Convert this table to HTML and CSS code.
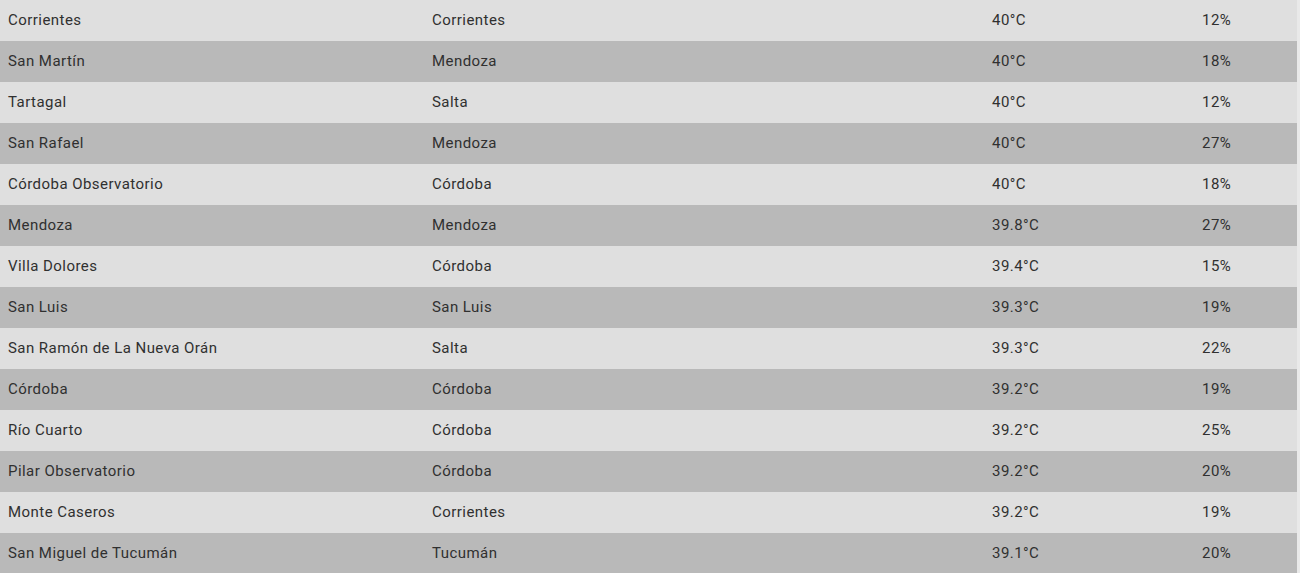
FILE: index.html
```html
<!DOCTYPE html>
<html lang="es">
<head>
<meta charset="utf-8">
<title>Temperaturas</title>
<link rel="stylesheet" href="styles.css">
</head>
<body>
<table class="temps">
<colgroup><col class="c1"><col class="c2"><col class="c3"><col class="c4"></colgroup>
<tbody>
<tr><td>Corrientes</td><td>Corrientes</td><td>40°C</td><td>12%</td></tr>
<tr><td>San Martín</td><td>Mendoza</td><td>40°C</td><td>18%</td></tr>
<tr><td>Tartagal</td><td>Salta</td><td>40°C</td><td>12%</td></tr>
<tr><td>San Rafael</td><td>Mendoza</td><td>40°C</td><td>27%</td></tr>
<tr><td>Córdoba Observatorio</td><td>Córdoba</td><td>40°C</td><td>18%</td></tr>
<tr><td>Mendoza</td><td>Mendoza</td><td>39.8°C</td><td>27%</td></tr>
<tr><td>Villa Dolores</td><td>Córdoba</td><td>39.4°C</td><td>15%</td></tr>
<tr><td>San Luis</td><td>San Luis</td><td>39.3°C</td><td>19%</td></tr>
<tr><td>San Ramón de La Nueva Orán</td><td>Salta</td><td>39.3°C</td><td>22%</td></tr>
<tr><td>Córdoba</td><td>Córdoba</td><td>39.2°C</td><td>19%</td></tr>
<tr><td>Río Cuarto</td><td>Córdoba</td><td>39.2°C</td><td>25%</td></tr>
<tr><td>Pilar Observatorio</td><td>Córdoba</td><td>39.2°C</td><td>20%</td></tr>
<tr><td>Monte Caseros</td><td>Corrientes</td><td>39.2°C</td><td>19%</td></tr>
<tr><td>San Miguel de Tucumán</td><td>Tucumán</td><td>39.1°C</td><td>20%</td></tr>
</tbody>
</table>
</body>
</html>
```
FILE: styles.css
```css
html, body {
  margin: 0;
  padding: 0;
  background: #e9e9e9;
}
.temps {
  width: 1297px;
  border-collapse: collapse;
  table-layout: fixed;
  font-family: Roboto, "Liberation Sans", Arial, sans-serif;
  font-size: 15px;
  letter-spacing: 0.45px;
  color: #303030;
}
.c1 { width: 424px; }
.c2 { width: 560px; }
.c3 { width: 210px; }
.c4 { width: 103px; }
.temps td {
  height: 41px;
  padding: 0 0 2px 8px;
  box-sizing: border-box;
  vertical-align: middle;
  white-space: nowrap;
}
.temps tr:nth-child(odd) { background: #dfdfdf; }
.temps tr:nth-child(even) { background: #b9b9b9; }
```
